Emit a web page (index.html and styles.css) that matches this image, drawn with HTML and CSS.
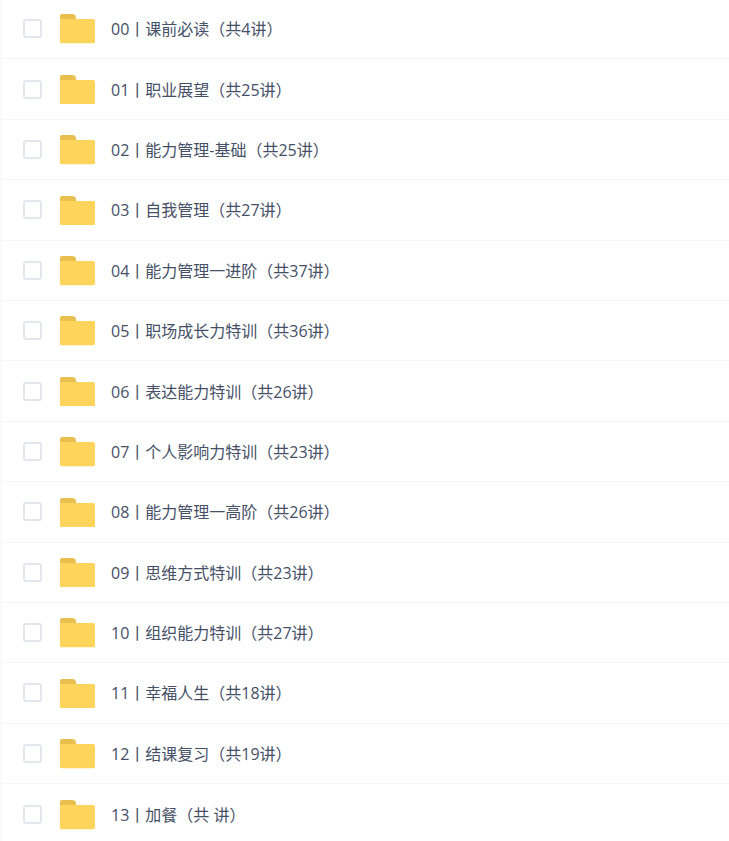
FILE: index.html
```html
<!DOCTYPE html>
<html lang="zh-CN">
<head>
<meta charset="utf-8">
<title>课程目录</title>
<link rel="stylesheet" href="styles.css">
</head>
<body>
<svg class="defs" width="0" height="0" aria-hidden="true"><defs>
<symbol id="folder" viewBox="0 0 35 29.500">
<path d="M0 2Q0 0 2 0H12Q15.500 0 16 3V6H0Z" fill="#e9bf50"/>
<path d="M0 5H33Q35 5 35 7V27.500Q35 29.500 33 29.500H2Q0 29.500 0 27.500Z" fill="#ffd45a"/>
</symbol>
</defs></svg>
<ul class="list">
<li class="row"><span class="check"></span><svg class="folder"><use href="#folder"/></svg><span class="name">00丨课前必读（共4讲）</span></li>
<li class="row"><span class="check"></span><svg class="folder"><use href="#folder"/></svg><span class="name">01丨职业展望（共25讲）</span></li>
<li class="row"><span class="check"></span><svg class="folder"><use href="#folder"/></svg><span class="name">02丨能力管理-基础（共25讲）</span></li>
<li class="row"><span class="check"></span><svg class="folder"><use href="#folder"/></svg><span class="name">03丨自我管理（共27讲）</span></li>
<li class="row"><span class="check"></span><svg class="folder"><use href="#folder"/></svg><span class="name">04丨能力管理一进阶（共37讲）</span></li>
<li class="row"><span class="check"></span><svg class="folder"><use href="#folder"/></svg><span class="name">05丨职场成长力特训（共36讲）</span></li>
<li class="row"><span class="check"></span><svg class="folder"><use href="#folder"/></svg><span class="name">06丨表达能力特训（共26讲）</span></li>
<li class="row"><span class="check"></span><svg class="folder"><use href="#folder"/></svg><span class="name">07丨个人影响力特训（共23讲）</span></li>
<li class="row"><span class="check"></span><svg class="folder"><use href="#folder"/></svg><span class="name">08丨能力管理一高阶（共26讲）</span></li>
<li class="row"><span class="check"></span><svg class="folder"><use href="#folder"/></svg><span class="name">09丨思维方式特训（共23讲）</span></li>
<li class="row"><span class="check"></span><svg class="folder"><use href="#folder"/></svg><span class="name">10丨组织能力特训（共27讲）</span></li>
<li class="row"><span class="check"></span><svg class="folder"><use href="#folder"/></svg><span class="name">11丨幸福人生（共18讲）</span></li>
<li class="row"><span class="check"></span><svg class="folder"><use href="#folder"/></svg><span class="name">12丨结课复习（共19讲）</span></li>
<li class="row"><span class="check"></span><svg class="folder"><use href="#folder"/></svg><span class="name">13丨加餐（共 讲）</span></li>
</ul>
</body>
</html>
```
FILE: styles.css
```css
html, body {
  margin: 0;
  padding: 0;
  background: #fff;
  height: 841px;
  overflow: hidden;
}
.defs {
  position: absolute;
}
.list {
  list-style: none;
  margin: -1px 0 0;
  padding: 0 0 0 2px;
  background: #fafafc;
}
.row {
  display: flex;
  align-items: center;
  box-sizing: border-box;
  height: 60.4px;
  padding-left: 21px;
  background: #fff;
  border-bottom: 1px solid #f5f5fa;
}
.row:last-child {
  border-bottom: 0;
}
.check {
  box-sizing: border-box;
  width: 19px;
  height: 19px;
  border: 2px solid #e3e6ec;
  border-radius: 3px;
  background: #fff;
  flex: none;
}
.folder {
  width: 35px;
  height: 29.500px;
  margin-left: 18px;
  margin-top: 1px;
  flex: none;
}
.name {
  margin-left: 16px;
  margin-top: 1px;
  font-family: "Open Sans", "Noto Sans CJK SC", sans-serif;
  font-size: 16px;
  line-height: 24px;
  color: #454f66;
  white-space: nowrap;
}
```
